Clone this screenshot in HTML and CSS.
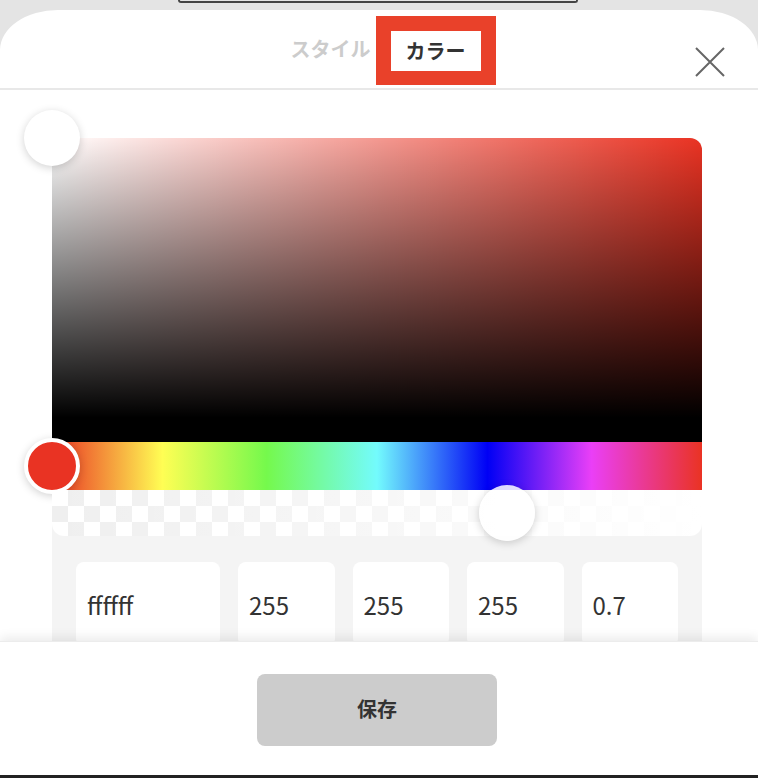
FILE: index.html
```html
<!DOCTYPE html>
<html lang="ja">

<head>
  <meta charset="UTF-8" />
  <meta name="viewport" content="width=device-width, initial-scale=1.0" />
  <title>カラー設定</title>
  <link rel="stylesheet" href="styles.css">
</head>

<body>

  <div class="backdrop">
    <div class="peek"></div>
  </div>

  <div class="sheet">
    <header class="sheet-head">
      <div class="tabs">
        <span class="tab">スタイル</span>
        <span class="tab active">カラー</span>
      </div>
      <button class="close" aria-label="閉じる">
        <svg width="30" height="30" viewBox="0 0 30 30">
          <path d="M1 1 L29 29 M29 1 L1 29" stroke="#666" stroke-width="2" fill="none" />
        </svg>
      </button>
    </header>

    <main class="sheet-body">
      <div class="picker">
        <div class="saturation">
          <span class="handle sat-handle"></span>
        </div>
        <div class="hue">
          <span class="handle hue-handle"></span>
        </div>
        <div class="alpha">
          <span class="handle alpha-handle"></span>
        </div>

        <div class="fields">
          <input class="field" type="text" value="ffffff" readonly>
          <input class="field" type="text" value="255" readonly>
          <input class="field" type="text" value="255" readonly>
          <input class="field" type="text" value="255" readonly>
          <input class="field" type="text" value="0.7" readonly>
        </div>
      </div>
    </main>

    <footer class="sheet-foot">
      <button class="save">保存</button>
    </footer>
  </div>

  <div class="home-bar"></div>

</body>
</html>
```

FILE: styles.css
```css
* {
  box-sizing: border-box;
  font-family: 'Noto Sans CJK JP', 'Noto Sans', sans-serif;
}

body {
  margin: 0;
  background: #e4e4e4;
  height: 778px;
  overflow: hidden;
}

.backdrop {
  height: 10px;
}

.peek {
  width: 400px;
  height: 3px;
  border: 2px solid #444;
  border-top: none;
  border-radius: 0 0 5px 5px;
  margin-left: 178px;
}

.sheet {
  height: 765px;
  background: white;
  border-radius: 58px 58px 0 0 / 40px 40px 0 0;
  display: flex;
  flex-direction: column;
  overflow: hidden;
}

.sheet-head {
  flex: none;
  height: 80px;
  border-bottom: 2px solid #e8e8e8;
  display: grid;
  grid-template-columns: 1fr auto 1fr;
  align-items: center;
  padding-left: 28px;
}

.tabs {
  grid-column: 2;
  display: flex;
  align-items: center;
  gap: 5px;
}

.tab {
  font-size: 20px;
  font-weight: bold;
  color: #cccccc;
  line-height: 40px;
}

.tab.active {
  color: #333;
  background: white;
  border: solid #e9412a;
  border-width: 15px 15px 14px 15px;
  padding: 0 15px;
  margin-top: 2px;
}

.close {
  grid-column: 3;
  justify-self: end;
  align-self: start;
  margin: 37px 33px 0 0;
  padding: 0;
  border: none;
  background: none;
  width: 30px;
  height: 30px;
  cursor: pointer;
}

.close svg {
  display: block;
}

.sheet-body {
  flex: 1;
  overflow: hidden;
  padding-top: 48px;
}

.picker {
  width: 650px;
  margin-left: 52px;
  background: #f4f4f4;
  border-radius: 12px 12px 0 0;
  padding-bottom: 40px;
}

.saturation {
  position: relative;
  height: 304px;
  border-radius: 12px 12px 0 0;
  background:
    linear-gradient(to top, #000 8%, rgba(0, 0, 0, 0)),
    linear-gradient(to right, #fff, rgba(255, 255, 255, 0)),
    #ea3323;
}

.hue {
  position: relative;
  height: 48px;
  background: linear-gradient(to right,
      #ea3323 0%,
      #fffe54 17%,
      #75f94c 33%,
      #73fbfd 50%,
      #0000f5 67%,
      #ea3ff7 83%,
      #ea3323 100%);
}

.alpha {
  position: relative;
  height: 46px;
  border-radius: 0 0 12px 12px;
  background:
    linear-gradient(to right, rgba(255, 255, 255, 0), #fff),
    conic-gradient(#efefef 25%, #fff 0 50%, #efefef 0 75%, #fff 0) 0 0 / 32px 32px;
}

.handle {
  position: absolute;
  width: 56px;
  height: 56px;
  border-radius: 50%;
  transform: translate(-50%, -50%);
  box-shadow: 0 2px 8px rgba(0, 0, 0, 0.18);
}

.sat-handle {
  left: 0;
  top: 0;
  background: white;
}

.hue-handle {
  left: 0;
  top: 50%;
  background: #e93323;
  border: 4px solid white;
}

.alpha-handle {
  left: 70%;
  top: 50%;
  background: rgba(255, 255, 255, 0.85);
}

.fields {
  margin-top: 26px;
  padding: 0 24px;
  display: grid;
  grid-template-columns: 144px repeat(4, 1fr);
  gap: 18px;
}

.field {
  width: 100%;
  min-width: 0;
  height: 84px;
  border: none;
  border-radius: 8px;
  background: white;
  padding: 0 11px;
  font-size: 24px;
  color: #333;
  outline: none;
}

.sheet-foot {
  position: relative;
  flex: none;
  height: 134px;
  background: white;
  display: flex;
  justify-content: center;
  align-items: flex-start;
  padding-top: 32px;
  box-shadow: 0 -4px 10px rgba(0, 0, 0, 0.08);
  border-top: 1px solid #ececec;
}

.save {
  width: 240px;
  height: 72px;
  border: none;
  border-radius: 8px;
  background: #cccccc;
  color: #333;
  font-size: 20px;
  font-weight: bold;
  line-height: 1;
  padding: 0 0 2px;
  cursor: pointer;
  margin-left: -4px;
}

.home-bar {
  height: 3px;
  background: #222;
}
```
